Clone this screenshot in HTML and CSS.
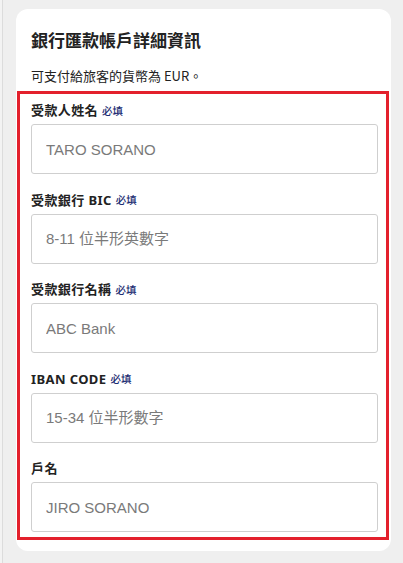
FILE: index.html
```html
<!DOCTYPE html>
<html lang="zh-Hant">
<head>
<meta charset="utf-8">
<link rel="stylesheet" href="styles.css">
</head>
<body>
<div class="page">
  <section class="card">
    <h2 class="title">銀行匯款帳戶詳細資訊</h2>
    <p class="note">可支付給旅客的貨幣為 EUR。</p>
    <div class="highlight">
      <div class="field">
        <label class="label">受款人姓名 <span class="req">必填</span></label>
        <input class="input" type="text" placeholder="TARO SORANO">
      </div>
      <div class="field">
        <label class="label">受款銀行 BIC <span class="req">必填</span></label>
        <input class="input" type="text" placeholder="8-11 位半形英數字">
      </div>
      <div class="field">
        <label class="label">受款銀行名稱 <span class="req">必填</span></label>
        <input class="input" type="text" placeholder="ABC Bank">
      </div>
      <div class="field">
        <label class="label">IBAN CODE <span class="req">必填</span></label>
        <input class="input" type="text" placeholder="15-34 位半形數字">
      </div>
      <div class="field">
        <label class="label">戶名</label>
        <input class="input" type="text" placeholder="JIRO SORANO">
      </div>
    </div>
  </section>
</div>
</body>
</html>
```

FILE: styles.css
```css
* { box-sizing: border-box; }

html, body {
  margin: 0;
  padding: 0;
}

body {
  background: #f3f3f3;
  font-family: "Noto Sans", "Noto Sans CJK TC", sans-serif;
  color: #222;
  height: 563px;
  overflow: hidden;
}

.page {
  margin-left: 2px;
  border-left: 1px solid #dcdcdc;
  background: #efefef;
  min-height: 563px;
  padding: 9px 12px 0 13px;
}

.card {
  background: #fff;
  border-radius: 12px;
  padding: 19px 13px 11px 15px;
}

.title {
  margin: 0;
  font-family: "Noto Sans CJK TC", sans-serif;
  font-size: 17px;
  font-weight: 700;
  line-height: 24px;
  color: #222;
}

.note {
  margin: 15px 0 0;
  font-family: "Noto Sans CJK TC", sans-serif;
  font-size: 13px;
  line-height: 18px;
  color: #222;
}

.highlight {
  margin: 6px -11px 0 -14px;
  border: 3px solid #e3202c;
  padding: 7px 8px 5px 11px;
}

.field + .field {
  margin-top: 16.6px;
}

.label {
  display: flex;
  align-items: center;
  gap: 4px;
  height: 18px;
  font-family: "Noto Sans", "Noto Sans CJK TC", sans-serif;
  font-size: 13px;
  font-weight: 700;
  line-height: 18px;
  letter-spacing: 0.4px;
  color: #222;
  margin-bottom: 5px;
  overflow: visible;
}

.req {
  font-family: "Noto Sans CJK TC", sans-serif;
  font-size: 10.5px;
  font-weight: 500;
  letter-spacing: 0;
  line-height: 18px;
  color: #1b2c72;
  padding-top: 1px;
}

.input {
  display: block;
  width: 100%;
  height: 50px;
  border: 1px solid #cfcfcf;
  border-radius: 3px;
  padding: 0 14px;
  font-family: "Liberation Sans", "Noto Sans CJK TC", sans-serif;
  font-size: 15px;
  color: #333;
  background: #fff;
  outline: none;
}

.input::placeholder {
  color: #7a7a7a;
}
```
